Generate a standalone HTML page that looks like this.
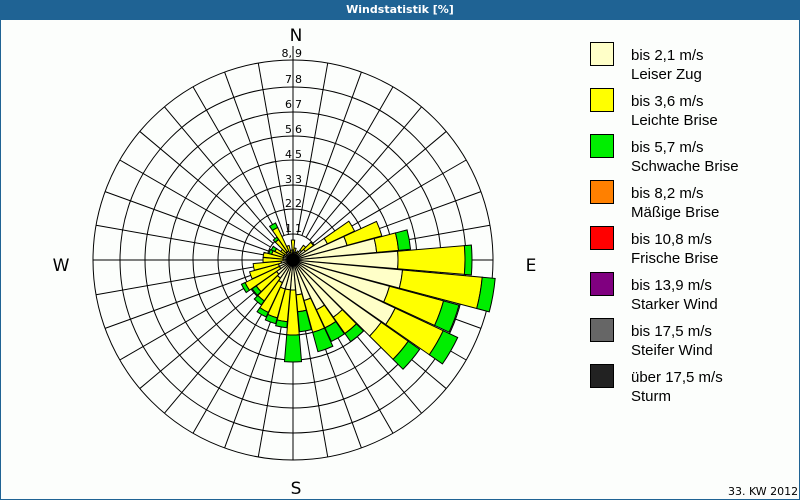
<!DOCTYPE html>
<html><head><meta charset="utf-8"><style>
html,body{margin:0;padding:0;}
body{width:800px;height:500px;overflow:hidden;background:#fcfefc;font-family:"Liberation Sans",sans-serif;}
#frame{position:absolute;left:0;top:0;width:798px;height:498px;border:1px solid #1f6394;}
#title{position:absolute;left:0;top:0;width:800px;height:20px;background:#1f6394;color:#fff;font:bold 11px "DejaVu Sans",sans-serif;text-align:center;line-height:20px;}
.lg{position:absolute;left:590px;width:22px;height:22px;border:1px solid #000;}
.lt{position:absolute;left:631px;font-size:15px;line-height:19px;color:#000;}
</style></head><body>
<div id="frame"></div>
<div id="title">Windstatistik [%]</div>
<svg id="s" width="800" height="500" style="position:absolute;left:0;top:0"></svg>
<div class="lg" style="top:42px;background:#ffffc8"></div><div class="lt" style="top:46px">bis 2,1 m/s<br>Leiser Zug</div>
<div class="lg" style="top:88px;background:#ffff00"></div><div class="lt" style="top:92px">bis 3,6 m/s<br>Leichte Brise</div>
<div class="lg" style="top:134px;background:#00ee00"></div><div class="lt" style="top:138px">bis 5,7 m/s<br>Schwache Brise</div>
<div class="lg" style="top:180px;background:#ff8000"></div><div class="lt" style="top:184px">bis 8,2 m/s<br>Mäßige Brise</div>
<div class="lg" style="top:226px;background:#ff0000"></div><div class="lt" style="top:230px">bis 10,8 m/s<br>Frische Brise</div>
<div class="lg" style="top:272px;background:#800080"></div><div class="lt" style="top:276px">bis 13,9 m/s<br>Starker Wind</div>
<div class="lg" style="top:318px;background:#666"></div><div class="lt" style="top:322px">bis 17,5 m/s<br>Steifer Wind</div>
<div class="lg" style="top:364px;background:#222"></div><div class="lt" style="top:368px">über 17,5 m/s<br>Sturm</div>
<div style="position:absolute;left:728px;top:485px;font-size:11px;font-family:'DejaVu Sans',sans-serif">33. KW 2012</div>
<script>
var s=document.getElementById('s'),cx=293,cy=260,h='';
function P(a,r){var t=(a-90)*Math.PI/180;return [cx+r*Math.cos(t),cy+r*Math.sin(t)];}
var R=[26,51,75,100,124,148,173,200];
R.forEach(function(r){h+='<circle cx="'+cx+'" cy="'+cy+'" r="'+r+'" fill="none" stroke="#000" stroke-width="1"/>';});
for(var a=0;a<360;a+=10){var p=P(a,26),q=P(a,200);h+='<line x1="'+p[0]+'" y1="'+p[1]+'" x2="'+q[0]+'" y2="'+q[1]+'" stroke="#000"/>';}
h+='<line x1="'+cx+'" y1="46" x2="'+cx+'" y2="260" stroke="#000"/>';
h+='<line x1="93" y1="260" x2="493" y2="260" stroke="#000"/>';
var D={0:[10,20,0],10:[8,12,0],20:[5,8,0],30:[8,10,0],40:[12,18,0],50:[15,25,0],60:[38,68,0],70:[56,92,0],80:[84,106,118],90:[105,172,179],100:[110,190,203],110:[100,156,172],120:[113,166,182],130:[108,141,155],140:[70,90,100],150:[55,75,90],160:[42,75,95],170:[35,52,72],180:[30,75,102],190:[30,62,68],200:[30,60,66],210:[25,58,63],220:[22,50,55],230:[20,45,50],240:[15,53,57],250:[15,45,0],260:[12,40,0],270:[10,30,0],280:[10,30,0],290:[10,22,25],300:[10,20,24],310:[8,15,0],320:[10,25,28],330:[10,36,41],340:[8,15,0],350:[5,10,0]};
var C=['#ffffc8','#ffff00','#00ee00'];
function sec(a,r0,r1,c){var a0=a-4.8,a1=a+4.8,p1=P(a0,r0),p2=P(a0,r1),p3=P(a1,r1),p4=P(a1,r0);
return '<path d="M'+p1+' L'+p2+' A'+r1+' '+r1+' 0 0 1 '+p3+' L'+p4+(r0>0?' A'+r0+' '+r0+' 0 0 0 '+p1:'')+' Z" fill="'+c+'" stroke="#000" stroke-width="1"/>';}
for(var k in D){var v=D[k],prev=0;for(var i=0;i<3;i++){if(v[i]>prev){h+=sec(+k,prev,v[i],C[i]);prev=v[i];}}}
h+='<circle cx="'+cx+'" cy="'+cy+'" r="6" fill="#000"/>';
var L=[['1','1',232],['2','2',207],['3','3',183],['4','5',158],['5','6',133],['6','7',108],['7','8',83],['8,','9',57]];
L.forEach(function(l){h+='<text x="'+(cx-1)+'" y="'+l[2]+'" text-anchor="end" font-size="11" font-family="DejaVu Sans,sans-serif">'+l[0]+'</text><text x="'+(cx+2)+'" y="'+l[2]+'" font-size="11" font-family="DejaVu Sans,sans-serif">'+l[1]+'</text>';});
h+='<text x="296" y="41" text-anchor="middle" font-size="17" font-family="DejaVu Sans,sans-serif">N</text>';
h+='<text x="296" y="494" text-anchor="middle" font-size="17" font-family="DejaVu Sans,sans-serif">S</text>';
h+='<text x="61" y="271" text-anchor="middle" font-size="17" font-family="DejaVu Sans,sans-serif">W</text>';
h+='<text x="531" y="271" text-anchor="middle" font-size="17" font-family="DejaVu Sans,sans-serif">E</text>';
s.innerHTML=h;
</script>
</body></html>
